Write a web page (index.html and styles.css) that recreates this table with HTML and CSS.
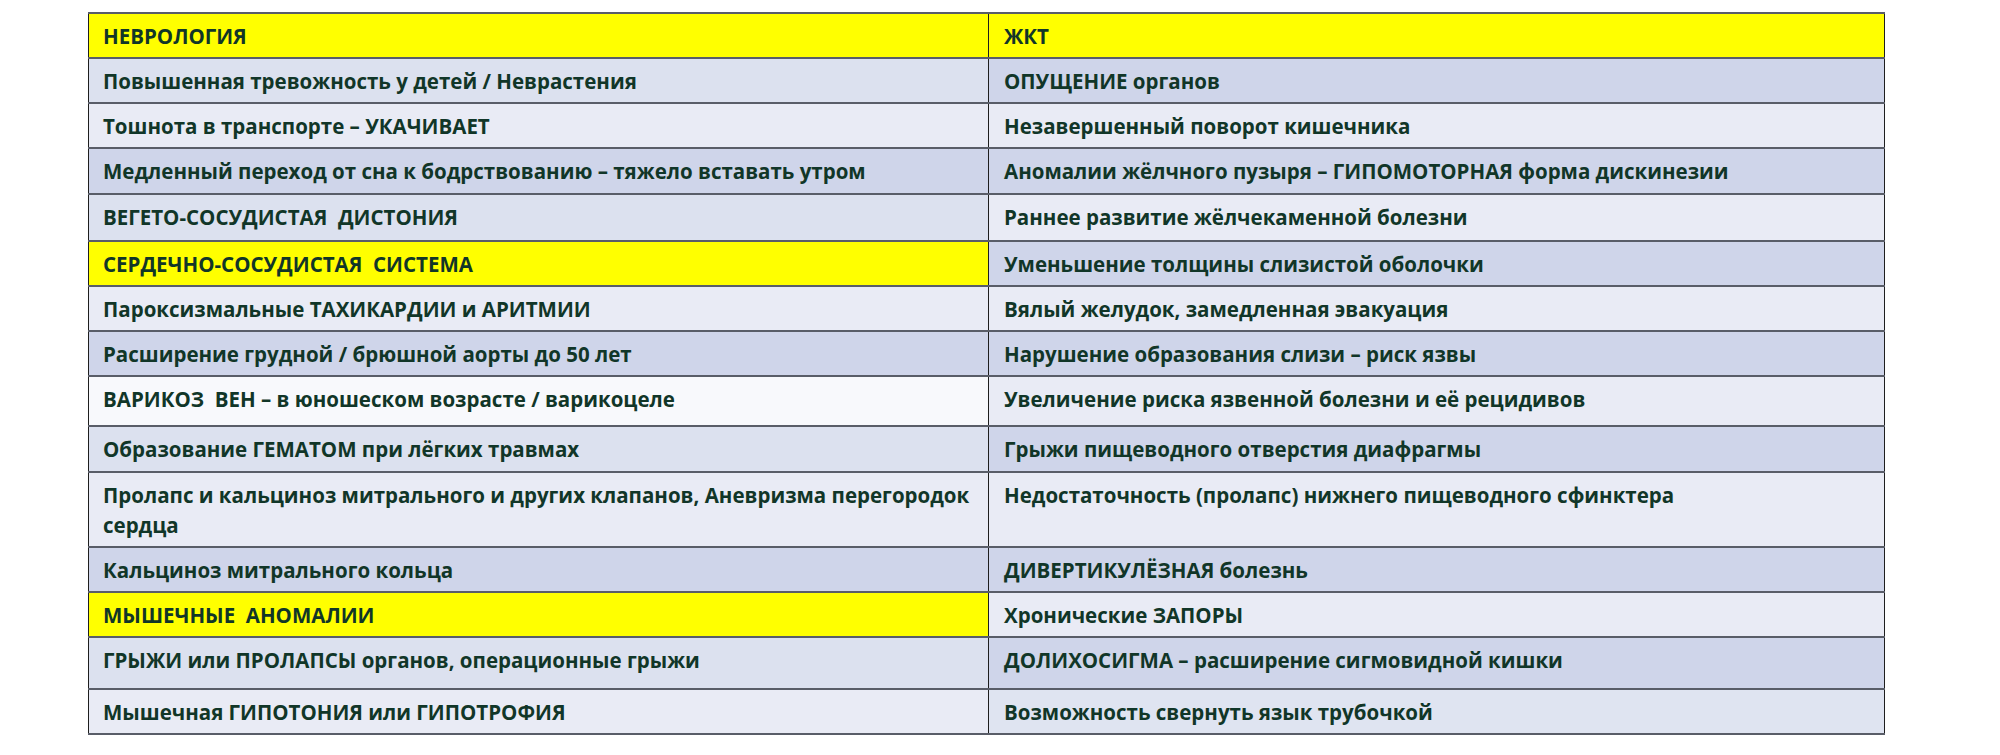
FILE: index.html
```html
<!DOCTYPE html>
<html lang="ru">
<head>
<meta charset="utf-8">
<title>Таблица</title>
<link rel="stylesheet" href="styles.css">
</head>
<body>
<table class="grid">
  <colgroup><col class="c-left"><col class="c-right"></colgroup>
  <tbody>
    <tr class="r">
      <td class="hd">НЕВРОЛОГИЯ</td>
      <td class="hd">ЖКТ</td>
    </tr>
    <tr class="r">
      <td class="mid">Повышенная тревожность у детей / Неврастения</td>
      <td class="dark">ОПУЩЕНИЕ органов</td>
    </tr>
    <tr class="r">
      <td class="light">Тошнота в транспорте – УКАЧИВАЕТ</td>
      <td class="light">Незавершенный поворот кишечника</td>
    </tr>
    <tr class="r r46">
      <td class="dark">Медленный переход от сна к бодрствованию – тяжело вставать утром</td>
      <td class="dark">Аномалии жёлчного пузыря – ГИПОМОТОРНАЯ форма дискинезии</td>
    </tr>
    <tr class="r r47">
      <td class="mid">ВЕГЕТО-СОСУДИСТАЯ&nbsp; ДИСТОНИЯ</td>
      <td class="light">Раннее развитие жёлчекаменной болезни</td>
    </tr>
    <tr class="r">
      <td class="hd">СЕРДЕЧНО-СОСУДИСТАЯ&nbsp; СИСТЕМА</td>
      <td class="dark">Уменьшение толщины слизистой оболочки</td>
    </tr>
    <tr class="r">
      <td class="light">Пароксизмальные ТАХИКАРДИИ и АРИТМИИ</td>
      <td class="light">Вялый желудок, замедленная эвакуация</td>
    </tr>
    <tr class="r">
      <td class="dark">Расширение грудной / брюшной аорты до 50 лет</td>
      <td class="dark">Нарушение образования слизи – риск язвы</td>
    </tr>
    <tr class="r r50">
      <td class="white">ВАРИКОЗ&nbsp; ВЕН – в юношеском возрасте / варикоцеле</td>
      <td class="light">Увеличение риска язвенной болезни и её рецидивов</td>
    </tr>
    <tr class="r r46">
      <td class="mid">Образование ГЕМАТОМ при лёгких травмах</td>
      <td class="dark">Грыжи пищеводного отверстия диафрагмы</td>
    </tr>
    <tr class="r">
      <td class="light">Пролапс и кальциноз митрального и других клапанов, Аневризма перегородок сердца</td>
      <td class="light">Недостаточность (пролапс) нижнего пищеводного сфинктера</td>
    </tr>
    <tr class="r">
      <td class="dark">Кальциноз митрального кольца</td>
      <td class="dark">ДИВЕРТИКУЛЁЗНАЯ болезнь</td>
    </tr>
    <tr class="r">
      <td class="hd">МЫШЕЧНЫЕ&nbsp; АНОМАЛИИ</td>
      <td class="light">Хронические ЗАПОРЫ</td>
    </tr>
    <tr class="r r52">
      <td class="mid">ГРЫЖИ или ПРОЛАПСЫ органов, операционные грыжи</td>
      <td class="dark">ДОЛИХОСИГМА – расширение сигмовидной кишки</td>
    </tr>
    <tr class="r">
      <td class="light">Мышечная ГИПОТОНИЯ или ГИПОТРОФИЯ</td>
      <td class="soft">Возможность свернуть язык трубочкой</td>
    </tr>
  </tbody>
</table>
</body>
</html>
```

FILE: styles.css
```css
html, body {
  margin: 0;
  padding: 0;
  background: #ffffff;
}

body {
  padding: 12px 0 0 88px;
}

.grid {
  border-collapse: collapse;
  table-layout: fixed;
  width: 1796px;
  border: 1.5px solid #1e1e1e;
  font-family: "Open Sans", "Liberation Sans", sans-serif;
  font-weight: 700;
  font-size: 20.5px;
  color: #113628;
}

.c-left { width: 900px; }
.c-right { width: 896px; }

.r { height: 45px; }
.r46 { height: 46px; }
.r47 { height: 47px; }
.r50 { height: 50px; }
.r52 { height: 52px; }

.grid td {
  vertical-align: top;
  padding: 7px 14px 6px 14px;
  line-height: 30px;
  border-top: 2px solid #595d68;
  border-bottom: 2px solid #595d68;
  border-left: 1px solid #1e1e1e;
  border-right: 1px solid #1e1e1e;
}

.grid td + td {
  padding-left: 15px;
}

.hd { background: #ffff00; }
.dark { background: #cfd5ea; }
.mid { background: #dce1ef; }
.light { background: #e9ebf5; }
.white { background: #f8f9fc; }
.soft { background: #dfe4f1; }
```
